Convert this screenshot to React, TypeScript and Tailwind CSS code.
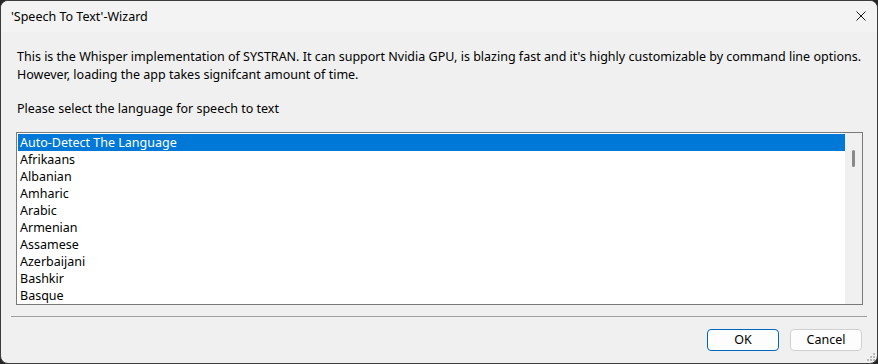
const languages = [
  "Auto-Detect The Language",
  "Afrikaans",
  "Albanian",
  "Amharic",
  "Arabic",
  "Armenian",
  "Assamese",
  "Azerbaijani",
  "Bashkir",
  "Basque",
];

export default function App() {
  return (
    <div
      className="w-[878px] h-[364px] bg-[#262626] text-[12.5px] text-black"
      style={{ fontFamily: '"Noto Sans", "Open Sans", sans-serif' }}
    >
      <div className="flex flex-col w-full h-full rounded-[8px] border border-[#3c3c3c] bg-[#f0f0f0] overflow-hidden relative">
        {/* title bar */}
        <div className="h-[31px] shrink-0 flex items-center justify-between bg-[#f3f3f3] pl-[10px] pr-[9px]">
          <span className="leading-[16px]">'Speech To Text'-Wizard</span>
          <svg width="10" height="10" viewBox="0 0 10 10" className="mr-[2px] mb-[2px]">
            <path d="M0.5 0.5 L9.5 9.5 M9.5 0.5 L0.5 9.5" stroke="#1a1a1a" strokeWidth="1" />
          </svg>
        </div>

        <div className="flex flex-col flex-1 px-[15px] pt-[16px]">
          <p className="leading-[18px] pl-[1px] whitespace-nowrap">
            This is the Whisper implementation of SYSTRAN. It can support Nvidia GPU, is blazing fast and it's highly
            customizable by command line options.
            <br />
            However, loading the app takes signifcant amount of time.
          </p>
          <p className="mt-[16px] leading-[18px] pl-[1px]">Please select the language for speech to text</p>

          <div className="mt-[14px] h-[173px] w-[847px] border border-[#7a7a7a] bg-white flex">
            <div className="flex-1 pt-[1px] pl-[1px]">
              {languages.map((lang, i) => (
                <div
                  key={lang}
                  className={
                    "h-[17px] leading-[17px] pl-[2px] " + (i === 0 ? "bg-[#0078d7] text-white" : "")
                  }
                >
                  {lang}
                </div>
              ))}
            </div>
            <div className="w-[17px] bg-[#f0f0f0] flex justify-center pt-[17px]">
              <div className="w-[3px] h-[17px] rounded-full bg-[#8a8a8a]" />
            </div>
          </div>
        </div>

        <div className="mx-[10px] h-px bg-[#a0a0a0]" />

        <div className="h-[46px] flex justify-end items-start gap-[11px] pt-[12px] pr-[15px]">
          <button className="w-[72px] h-[22px] rounded-[4px] border border-[#0067c0] bg-[#fdfdfd] leading-[20px]">
            OK
          </button>
          <button className="w-[72px] h-[22px] rounded-[4px] border border-[#d0d0d0] bg-[#fdfdfd] leading-[20px]">
            Cancel
          </button>
        </div>

        {/* resize grip */}
        <svg width="10" height="10" viewBox="0 0 10 10" className="absolute right-[2px] bottom-[2px]">
          {[
            [8, 2],
            [5, 5],
            [8, 5],
            [2, 8],
            [5, 8],
            [8, 8],
          ].map(([x, y]) => (
            <rect key={`${x}-${y}`} x={x} y={y} width="2" height="2" fill="#b8b8b8" />
          ))}
        </svg>
      </div>
    </div>
  );
}
